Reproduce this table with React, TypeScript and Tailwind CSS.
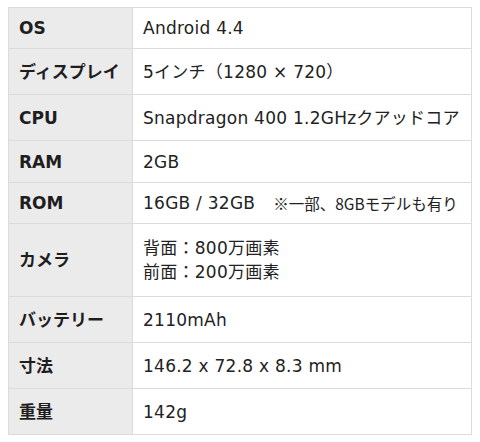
import React from 'react';

type Spec = {
  label: string;
  h: string;
  value: React.ReactNode;
};

// row heights measured from the reference (top border included, except the first row)
const SPECS: Spec[] = [
  { label: 'OS', h: 'h-[40px]', value: 'Android 4.4' },
  { label: 'ディスプレイ', h: 'h-[46px] border-t', value: '5インチ（1280 × 720）' },
  { label: 'CPU', h: 'h-[46px] border-t', value: 'Snapdragon 400 1.2GHzクアッドコア' },
  { label: 'RAM', h: 'h-[42px] border-t', value: '2GB' },
  {
    label: 'ROM',
    h: 'h-[41px] border-t',
    value: (
      <>
        16GB / 32GB
        <span className="ml-[18px] text-[15.5px] tracking-normal font-['Noto_Sans_CJK_JP',sans-serif]">
          ※一部、8GBモデルも有り
        </span>
      </>
    ),
  },
  {
    label: 'カメラ',
    h: 'h-[73px] border-t',
    value: (
      <div className="flex flex-col leading-[24px]">
        <span>背面：800万画素</span>
        <span>前面：200万画素</span>
      </div>
    ),
  },
  { label: 'バッテリー', h: 'h-[46px] border-t', value: '2110mAh' },
  { label: '寸法', h: 'h-[46px] border-t', value: '146.2 x 72.8 x 8.3 mm' },
  { label: '重量', h: 'h-[46px] border-t', value: '142g' },
];

const SpecRow: React.FC<{ spec: Spec }> = ({ spec }) => (
  <div className={`flex border-[#dcdcdc] ${spec.h}`}>
    <div className="flex w-[124px] shrink-0 items-center border-r border-[#dcdcdc] bg-[#ebebeb] pl-[10px] font-bold text-[#1e1e1e]">
      {spec.label}
    </div>
    <div className="flex flex-1 items-center pl-[10px] whitespace-nowrap tracking-[0.25px]">{spec.value}</div>
  </div>
);

export default function App() {
  return (
    <div className="h-[442px] w-[480px] bg-white pl-[8px] pt-[7px] font-['DejaVu_Sans','Noto_Sans_CJK_JP',sans-serif] text-[17px] leading-[22px] text-[#222]">
      <div className="w-[464px] border border-[#dcdcdc]">
        {SPECS.map((s) => (
          <SpecRow key={s.label} spec={s} />
        ))}
      </div>
    </div>
  );
}
